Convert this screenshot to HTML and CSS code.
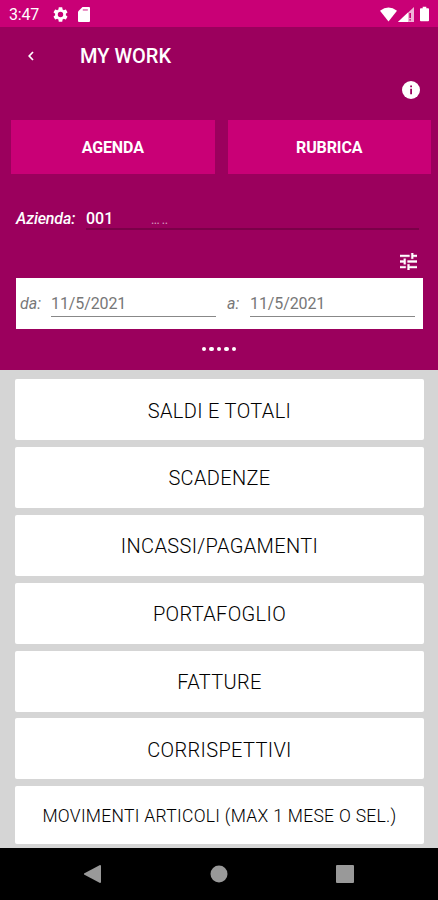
FILE: index.html
```html
<!DOCTYPE html>
<html lang="it">
<head>
    <meta charset="UTF-8">
    <meta name="viewport" content="width=device-width, initial-scale=1.0">
    <title>My Work</title>
    <link rel="stylesheet" href="styles.css">
</head>
<body>
    <!-- Barra di stato -->
    <div class="statusbar">
        <span class="time">3:47</span>
        <svg class="gear" viewBox="2 2 20 20" width="15" height="15"><path fill="#fff" d="M19.14 12.94c.04-.3.06-.61.06-.94 0-.32-.02-.64-.07-.94l2.03-1.58a.49.49 0 0 0 .12-.61l-1.92-3.32a.488.488 0 0 0-.59-.22l-2.39.96c-.5-.38-1.03-.7-1.62-.94l-.36-2.54a.484.484 0 0 0-.48-.41h-3.84c-.24 0-.43.17-.47.41l-.36 2.54c-.59.24-1.13.57-1.62.94l-2.39-.96c-.22-.08-.47 0-.59.22L2.74 8.87c-.12.21-.08.47.12.61l2.03 1.58c-.05.3-.09.63-.09.94s.02.64.07.94l-2.03 1.58a.49.49 0 0 0-.12.61l1.92 3.32c.12.22.37.29.59.22l2.39-.96c.5.38 1.03.7 1.62.94l.36 2.54c.05.24.24.41.48.41h3.84c.24 0 .44-.17.47-.41l.36-2.54c.59-.24 1.13-.56 1.62-.94l2.39.96c.22.08.47 0 .59-.22l1.92-3.32c.12-.22.07-.47-.12-.61l-2.01-1.58zM12 15.6A3.6 3.6 0 1 1 12 8.4a3.6 3.6 0 0 1 0 7.2z"/></svg>
        <svg class="card-icon" viewBox="0 0 12 15" width="12" height="15"><path fill="#fff" d="M4.500 0H11q1 0 1 1v13q0 1-1 1H1q-1 0-1-1V4.500z"/><path fill="#c90076" fill-opacity=".6" d="M4.800 2.200h5v1.500h-5z"/></svg>
        <svg class="wifi" viewBox="0 0 18 15" width="17" height="15"><path fill="#fff" d="M0 3.500Q9-3.500 18 3.500L9 15z"/></svg>
        <svg class="signal" viewBox="0 0 16 15" width="16" height="15"><path fill="#fff" fill-opacity=".7" d="M16 0v15H0z"/><path fill="#fff" d="M10 5.600V15H0z"/><path fill="#c90076" d="M11.300 6h1.700v5h-1.700zM11.300 12.300H13V13.500h-1.700z"/></svg>
        <svg class="battery" viewBox="0 0 10 16" width="9" height="16"><path fill="#fff" d="M3 0h4v1.500h2q1 0 1 1V15q0 1-1 1H1q-1 0-1-1V2.500q0-1 1-1h2z"/></svg>
    </div>

    <div class="header">
        <div class="titlebar">
            <svg class="back" viewBox="0 0 6 10" width="6" height="10"><path fill="none" stroke="#fff" stroke-width="1.700" d="M5 1L1.200 5 5 9"/></svg>
            <h1>MY WORK</h1>
        </div>
        <div class="info">
            <svg viewBox="0 0 18 18" width="18" height="18"><circle cx="9" cy="9" r="9" fill="#fff"/><path fill="#9b005d" d="M8.200 4.500H10v1.800H8.200zM8.200 7.800H10v5.400H8.200z"/></svg>
        </div>
        <div class="tabs">
            <button>AGENDA</button>
            <button>RUBRICA</button>
        </div>
        <div class="company">
            <label>Azienda:</label>
            <div class="company-value"><span>001</span><span class="dashes">... ..</span></div>
        </div>
        <div class="filter">
            <svg viewBox="3 3 18 18" width="17" height="17"><path fill="#fff" stroke="#fff" stroke-width=".4" d="M3 17v2h6v-2H3zM3 5v2h10V5H3zm10 16v-2h8v-2h-8v-2h-2v6h2zM7 9v2H3v2h4v2h2V9H7zm14 4v-2H11v2h10zm-6-4h2V7h4V5h-4V3h-2v6z"/></svg>
        </div>
        <div class="dates">
            <label>da:</label>
            <span class="date">11/5/2021</span>
            <label class="to">a:</label>
            <span class="date">11/5/2021</span>
        </div>
        <div class="dots"><i></i><i></i><i></i><i></i><i></i></div>
    </div>

    <!-- Voci del menu -->
    <div class="menu">
        <div class="item">SALDI E TOTALI</div>
        <div class="item">SCADENZE</div>
        <div class="item">INCASSI/PAGAMENTI</div>
        <div class="item">PORTAFOGLIO</div>
        <div class="item">FATTURE</div>
        <div class="item">CORRISPETTIVI</div>
        <div class="item small">MOVIMENTI ARTICOLI (MAX 1 MESE O SEL.)</div>
    </div>

    <!-- Barra di navigazione di sistema -->
    <div class="navbar">
        <svg viewBox="0 0 17 18" width="17" height="18"><path fill="#999" d="M16 0q1 0 1 1v16q0 1-1 1L0 9.500v-1z"/></svg>
        <svg viewBox="0 0 18 18" width="18" height="18"><circle cx="9" cy="9" r="8.500" fill="#999"/></svg>
        <svg viewBox="0 0 18 18" width="18" height="18"><rect width="18" height="18" rx="1" fill="#999"/></svg>
    </div>
</body>
</html>
```

FILE: styles.css
```css
body {
    font-family: Roboto, "Liberation Sans", sans-serif;
    margin: 0;
    height: 900px;
    display: flex;
    flex-direction: column;
    overflow: hidden;
    background: #d5d5d5;
}
svg {
    display: block;
    flex: none;
}
.statusbar {
    height: 27px;
    box-sizing: border-box;
    background: #c90076;
    color: #fff;
    display: flex;
    align-items: center;
    padding: 1px 9px 0;
}
.time {
    width: 44px;
    font-size: 16px;
    letter-spacing: -.2px;
}
.card-icon {
    margin-left: 10px;
}
.wifi {
    margin-left: auto;
}
.signal {
    margin-left: 1px;
}
.battery {
    margin-left: 6px;
}
.header {
    height: 343px;
    background: #9b005d;
    color: #fff;
}
.titlebar {
    height: 57px;
    display: flex;
    align-items: center;
    padding-left: 28px;
}
h1 {
    margin: 0 0 0 46px;
    font-size: 20px;
    font-weight: 500;
}
.info {
    height: 36px;
    padding: 0 18px 0 0;
    box-sizing: border-box;
    display: flex;
    justify-content: flex-end;
    align-items: flex-start;
    margin-top: -3px;
}
.tabs {
    display: flex;
    gap: 13px;
    padding: 3px 7px 0 11px;
}
.tabs button {
    flex: 1;
    height: 54px;
    border: none;
    padding: 0;
    background: #c90076;
    color: #fff;
    font: 700 16px Roboto, sans-serif;
    letter-spacing: -.1px;
}
.company {
    display: flex;
    align-items: flex-end;
    margin: 29px 19px 0 16px;
    height: 27px;
    line-height: 31px;
    font-size: 16px;
}
.company label {
    width: 70px;
    height: 27px;
    font-style: italic;
    font-weight: 500;
    letter-spacing: -.15px;
}
.company-value {
    flex: 1;
    height: 27px;
    box-sizing: border-box;
    border-bottom: 2px solid #7b0049;
    font-weight: 500;
}
.dashes {
    margin-left: 38px;
    font-size: 10px;
    opacity: .6;
}
.filter {
    display: flex;
    justify-content: flex-end;
    padding: 23px 21px 0 0;
    height: 25px;
}
.dates {
    height: 51px;
    margin: 0 15px 0 16px;
    box-sizing: border-box;
    padding: 0 8px 0 4px;
    display: flex;
    align-items: center;
    background: #fff;
    color: #777;
    font-size: 16px;
}
.dates label {
    width: 31px;
    font-style: italic;
}
.dates .to {
    width: 23px;
    margin-left: 11px;
}
.date {
    flex: 1;
    height: 26px;
    line-height: 26px;
    box-sizing: border-box;
    border-bottom: 1px solid #888;
    letter-spacing: -.1px;
}
.dots {
    display: flex;
    justify-content: center;
    gap: 3px;
    padding-top: 18px;
}
.dots i {
    width: 4.400px;
    height: 4.400px;
    border-radius: 50%;
    background: #fff;
}
.menu {
    flex: 1;
    min-height: 0;
    box-sizing: border-box;
    padding: 9px 14px 3px 15px;
    display: flex;
    flex-direction: column;
    gap: 6.900px;
}
.item {
    flex: 0 0 61px;
    box-sizing: border-box;
    padding-top: 2px;
    display: flex;
    align-items: center;
    justify-content: center;
    border-radius: 2px;
    background: #fff;
    color: #000;
    font-size: 20px;
    font-weight: 300;
    letter-spacing: .35px;
}
.item.small {
    flex-basis: 58px;
    font-size: 17.500px;
    letter-spacing: .3px;
}
.navbar {
    height: 52px;
    background: #000;
    display: flex;
    align-items: center;
    justify-content: space-between;
    padding: 0 84px;
}
```
